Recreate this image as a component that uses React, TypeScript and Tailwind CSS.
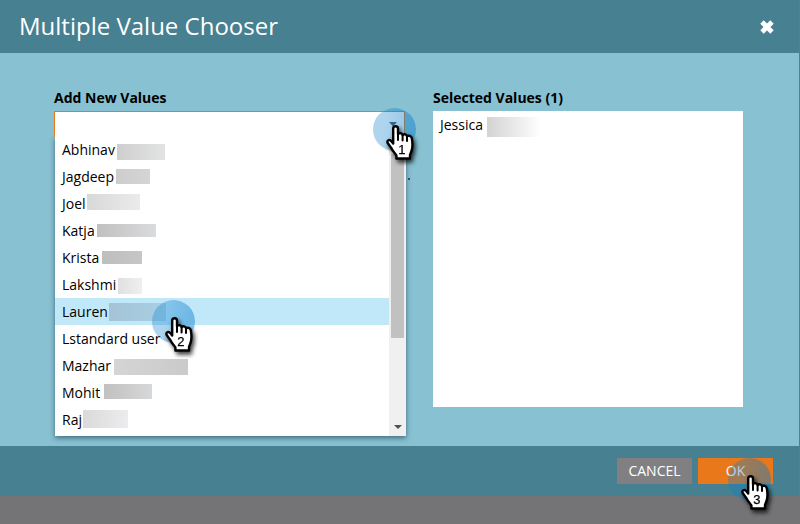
import React from "react";

type Row = { name: string; blur: string };

const rows: Row[] = [
  { name: "Abhinav", blur: "left-[62px] top-[8px] w-[48px] h-[16px] bg-linear-to-r from-[#cfcecf] to-[#e2e3e3]" },
  { name: "Jagdeep", blur: "left-[61px] top-[6px] w-[34px] h-[15px] bg-linear-to-r from-[#cdcdce] to-[#d5d5d7]" },
  { name: "Joel", blur: "left-[32px] top-[4px] w-[53px] h-[16px] bg-linear-to-r from-[#d8d8d8] to-[#ebebeb]" },
  { name: "Katja", blur: "left-[42px] top-[7px] w-[59px] h-[13px] bg-linear-to-r from-[#c1c0c0] to-[#dadbde]" },
  { name: "Krista", blur: "left-[47px] top-[7px] w-[40px] h-[13px] bg-linear-to-r from-[#bfbebe] to-[#c6c6c8]" },
  { name: "Lakshmi", blur: "left-[63px] top-[7px] w-[24px] h-[16px] bg-linear-to-r from-[#e0e0e0] to-[#efefef]" },
  { name: "Lauren", blur: "left-[54px] top-[5px] w-[57px] h-[18px] bg-linear-to-r from-[#a4c3d5] to-[#a9d0e6]" },
  { name: "Lstandard user", blur: "hidden" },
  { name: "Mazhar", blur: "left-[59px] top-[7px] w-[74px] h-[16px] bg-linear-to-r from-[#d5d5d5] to-[#cbcacb]" },
  { name: "Mohit", blur: "left-[49px] top-[5px] w-[48px] h-[15px] bg-linear-to-r from-[#c2c0c0] to-[#d7d8da]" },
  { name: "Raj", blur: "left-[28px] top-[4px] w-[45px] h-[18px] bg-linear-to-r from-[#dadadb] to-[#ececee]" },
];

function Pointer({ n, place }: { n: string; place: string }) {
  return (
    <div className={`absolute z-20 h-[60px] w-[50px] ${place}`}>
      <div className="h-[43px] w-[43px] rounded-full bg-[linear-gradient(100deg,rgba(10,126,205,0.33)_30%,rgba(10,126,205,0.46)_85%)]" />
      <svg
        className="absolute left-[13px] top-[17px] overflow-visible drop-shadow-[2px_3px_2px_rgba(0,0,0,0.75)]"
        width="29"
        height="36"
        viewBox="0 0 29 36"
      >
        <path
          d="M7.2 18.5V3.4C7.2 0.5 12 0.5 12 3.4V9.2C13.3 7.5 16.2 8 16.6 10C18 8.7 20.6 9.4 21 11.3C22.6 10.2 25.3 10.9 25.8 13.2C26.5 17 26.7 22.5 25.5 26C24.8 28 24.2 29 24 30V33.5H10.4V30.5C8.4 27.5 6.8 26.3 5.6 23.6C4.7 21.5 2.6 19.7 1.5 17.6C0.8 14.8 3.9 14.3 5.4 16.2Z"
          fill="#fff"
          stroke="#000"
          strokeWidth="2.4"
          strokeLinejoin="round"
        />
        <path d="M12 8.5V15M16.6 10V15.5M21 11.5V16" stroke="#000" strokeWidth="2" strokeLinecap="round" />
        <text x="15.8" y="28.5" fontFamily="Liberation Sans, Arial, sans-serif" fontSize="13" textAnchor="middle" fill="#000" stroke="#000" strokeWidth="0.25">
          {n}
        </text>
      </svg>
    </div>
  );
}

export default function App() {
  return (
    <div className="relative h-[524px] w-[800px] overflow-hidden bg-[#747476] font-['Open_Sans',sans-serif] text-[14px] text-black">
      <div className="flex h-[496px] w-[799px] flex-col">
        <header className="flex h-[53px] items-center justify-between bg-[#468091] pl-[19px] pr-[24px] text-white">
          <h1 className="-mt-[2px] text-[24px] leading-[51px]">Multiple Value Chooser</h1>
          <svg width="16" height="16" viewBox="0 0 16 16" className="mt-[1px]">
            <path d="M3 3L13 13M13 3L3 13" stroke="#fff" strokeWidth="4.8" />
          </svg>
        </header>

        <main className="flex h-[393px] gap-[27px] bg-[#88c1d2] pl-[54px] pt-[35px]">
          <section className="w-[352px]">
            <h2 className="h-[23px] leading-[20px] font-bold">Add New Values</h2>
            <div className="relative z-10 h-[26px] w-[351px] border border-[#e87818] border-b-0 bg-white">
              <svg className="absolute right-[7px] top-[10px]" width="8" height="5" viewBox="0 0 8 5">
                <path d="M0 0H8L4 4.5Z" fill="#555" />
              </svg>
            </div>
            <div className="relative ml-[1px] flex h-[299px] w-[351px] bg-white shadow-[0_2px_5px_rgba(20,60,75,0.65)]">
              <ul className="-mt-[1px] w-[334px]">
                {rows.map((r) => (
                  <li
                    key={r.name}
                    className={`relative h-[27px] pl-[7px] leading-[27px] ${r.name === "Lauren" ? "bg-[#c1e8f9]" : ""}`}
                  >
                    {r.name}
                    <span className={`absolute ${r.blur}`} />
                  </li>
                ))}
              </ul>
              <div className="flex w-[17px] flex-col items-center justify-between bg-[#f0f0f0] pb-[7px] pt-[17px]">
                <div className="h-[184px] w-[13px] bg-[#c1c1c1]" />
                <svg width="8" height="4" viewBox="0 0 8 4">
                  <path d="M0 0H8L4 4Z" fill="#505050" />
                </svg>
              </div>
            </div>
          </section>

          <section className="w-[310px]">
            <h2 className="h-[23px] leading-[20px] font-bold">Selected Values (1)</h2>
            <div className="flex h-[296px] gap-[4px] bg-white pl-[7px] pt-[6px]">
              <span className="leading-[16px]">Jessica</span>
              <span className="h-[20px] w-[54px] bg-linear-to-r from-[#d3d3d3] to-white" />
            </div>
          </section>
        </main>

        <footer className="flex h-[50px] items-start justify-end gap-[6px] bg-[#468091] pr-[26px] pt-[12px] text-white">
          <button className="h-[26px] w-[75px] bg-[#808082] leading-[26px]">CANCEL</button>
          <button className="h-[26px] w-[75px] bg-[#e8781a] leading-[26px]">OK</button>
        </footer>
      </div>

      <span className="absolute left-[408px] top-[178px] h-[2px] w-[2px] bg-[#344f5a]" />
      <Pointer n="1" place="left-[373px] top-[108px]" />
      <Pointer n="2" place="left-[152px] top-[300px]" />
      <Pointer n="3" place="left-[728px] top-[458px]" />
    </div>
  );
}
